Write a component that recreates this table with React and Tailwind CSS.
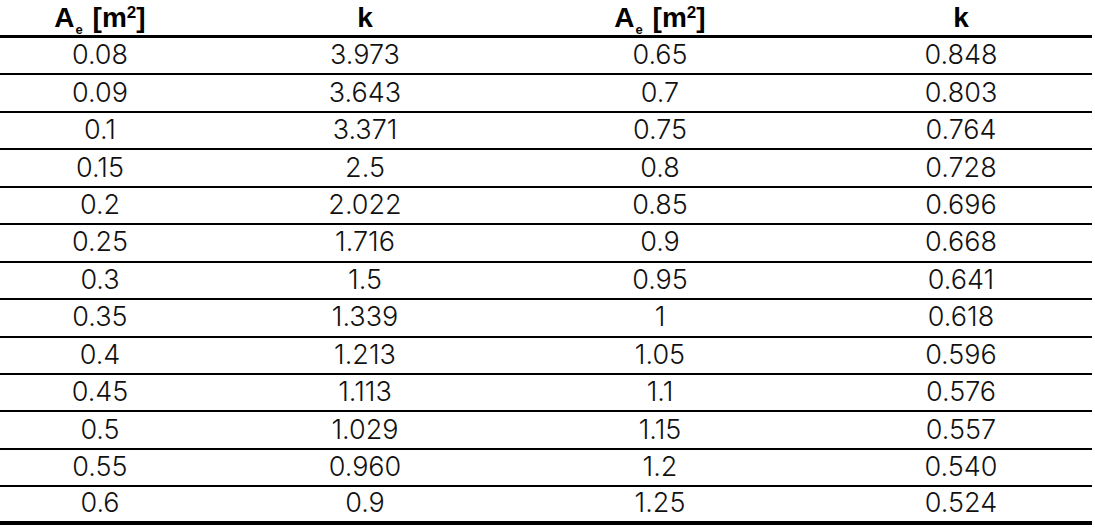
import React from 'react';

const rows = [
  ['0.08', '3.973', '0.65', '0.848'],
  ['0.09', '3.643', '0.7', '0.803'],
  ['0.1', '3.371', '0.75', '0.764'],
  ['0.15', '2.5', '0.8', '0.728'],
  ['0.2', '2.022', '0.85', '0.696'],
  ['0.25', '1.716', '0.9', '0.668'],
  ['0.3', '1.5', '0.95', '0.641'],
  ['0.35', '1.339', '1', '0.618'],
  ['0.4', '1.213', '1.05', '0.596'],
  ['0.45', '1.113', '1.1', '0.576'],
  ['0.5', '1.029', '1.15', '0.557'],
  ['0.55', '0.960', '1.2', '0.540'],
  ['0.6', '0.9', '1.25', '0.524'],
];

const gridCols = "grid grid-cols-[200px_330px_260px_302px]";

const AreaHeader = () => (
  <span className="whitespace-nowrap">
    A<sub className="text-[13px] font-bold relative top-[7px] align-baseline ml-[1px] mr-[2px]">e</sub> [m<sup className="text-[17px] font-bold relative -top-[9px] align-baseline">2</sup>]
  </span>
);

const App = () => {
  return (
    <div className="w-[1095px] h-[529px] bg-white font-['Liberation_Sans',Arial,sans-serif] text-black">
      <div className="w-[1092px]">
        <div className={`${gridCols} h-[38px] border-b-[3px] border-black text-[28px] font-bold leading-none`}>
          <div className="flex items-center justify-center pt-[1px]"><AreaHeader /></div>
          <div className="flex items-center justify-center">k</div>
          <div className="flex items-center justify-center pt-[1px]"><AreaHeader /></div>
          <div className="flex items-center justify-center pl-10">k</div>
        </div>
        {rows.map((r, i) => (
          <div
            key={i}
            className={`${gridCols} h-[37.45px] border-black text-[27px] font-light leading-none text-[#111] font-['Inter',sans-serif] ${i === rows.length - 1 ? 'border-b-4' : 'border-b-2'}`}
          >
            <div className="flex items-center justify-center pb-[2px]">{r[0]}</div>
            <div className="flex items-center justify-center pb-[2px]">{r[1]}</div>
            <div className="flex items-center justify-center pb-[2px]">{r[2]}</div>
            <div className="flex items-center justify-center pb-[2px] pl-10">{r[3]}</div>
          </div>
        ))}
      </div>
    </div>
  );
};

export default App;
